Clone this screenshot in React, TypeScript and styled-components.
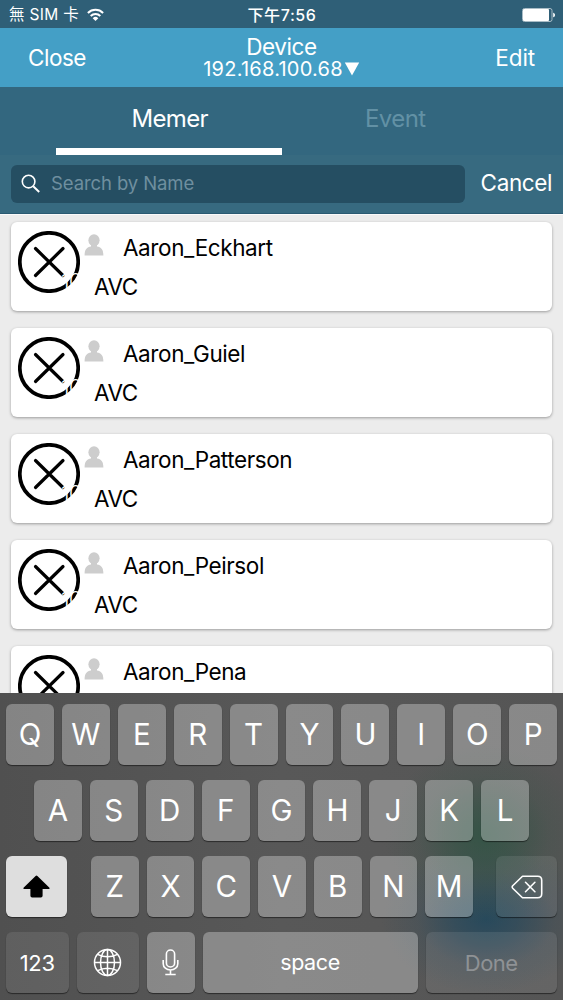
import React from 'react';
import styled, { createGlobalStyle } from 'styled-components';

const Global = createGlobalStyle`
  * { box-sizing: border-box; }
  html, body { margin: 0; padding: 0; overflow: hidden; }
  body { font-family: Inter, "Noto Sans CJK TC", sans-serif; background: #ededed; }
`;

const Screen = styled.div`
  width: 563px;
  height: 1000px;
  display: flex;
  flex-direction: column;
  overflow: hidden;
  background: #ececec;
`;

const Txt = styled.span<{ $size: number; $ls?: number; $color?: string; $weight?: number }>`
  font-size: ${p => p.$size}px;
  letter-spacing: ${p => p.$ls ?? 0}px;
  color: ${p => p.$color ?? '#fff'};
  font-weight: ${p => p.$weight ?? 400};
  line-height: 1;
  white-space: nowrap;
`;

const StatusBar = styled.header`
  height: 28px;
  flex: none;
  display: grid;
  grid-template-columns: 1fr auto 1fr;
  align-items: center;
  padding: 1px 8px 0 9px;
  background: #2f5f77;
`;

const Carrier = styled.div`
  display: flex;
  align-items: center;
  gap: 8px;
`;

const BatterySlot = styled.div`
  display: flex;
  justify-content: flex-end;
`;

const NavBar = styled.nav`
  height: 59px;
  flex: none;
  display: grid;
  grid-template-columns: 1fr auto 1fr;
  align-items: center;
  padding: 0 28px;
  background: #449fc6;
`;

const NavTitle = styled.div`
  display: flex;
  flex-direction: column;
  align-items: center;
`;

const Address = styled.div`
  display: flex;
  align-items: center;
  gap: 1px;
`;

const NavAction = styled.div<{ $end?: boolean }>`
  display: flex;
  justify-content: ${p => (p.$end ? 'flex-end' : 'flex-start')};
  padding-top: 1px;
`;

const Tabs = styled.div`
  height: 68px;
  flex: none;
  display: flex;
  padding: 0 56px;
  background: #33677f;
`;

const Tab = styled.div<{ $active?: boolean }>`
  flex: 1;
  display: flex;
  align-items: center;
  justify-content: center;
  padding: 3px 0 0 2px;
  border-bottom: 7px solid ${p => (p.$active ? '#fff' : 'transparent')};
`;

const SearchBar = styled.div`
  height: 59px;
  flex: none;
  display: flex;
  align-items: center;
  justify-content: space-between;
  padding: 0 11px 1px 11px;
  background: #376a80;
  border-bottom: 1px solid #2a5a72;
`;

const SearchField = styled.div`
  width: 454px;
  height: 38px;
  display: flex;
  align-items: center;
  gap: 11px;
  padding-left: 10px;
  border-radius: 6px;
  background: #254e62;
`;

const List = styled.main`
  height: 479px;
  flex: none;
  display: flex;
  flex-direction: column;
  gap: 17px;
  padding: 7px 11px 0;
  overflow: hidden;
  border-top: 1px solid #fafafa;
`;

const Card = styled.article`
  height: 89px;
  flex: none;
  display: flex;
  border-radius: 6px;
  background: #fff;
  box-shadow: 0 1px 3px rgba(0, 0, 0, 0.35);
`;

const Badge = styled.div`
  position: relative;
  width: 62px;
  height: 62px;
  margin: 9px 0 0 7px;
`;

const Count = styled.span`
  position: absolute;
  left: 43px;
  top: 39px;
  color: #fff;
  font-size: 22px;
  font-weight: 300;
  line-height: 1;
  letter-spacing: -1px;
  opacity: 0.99;
`;

const Details = styled.div`
  display: flex;
  flex-direction: column;
  padding: 12px 0 0 4px;
`;

const NameRow = styled.div`
  height: 28px;
  display: flex;
  align-items: flex-start;
  gap: 19px;
`;

const NameText = styled.div`
  padding-top: 3px;
`;

const Group = styled.div`
  padding: 14px 0 0 10px;
  line-height: 1;
`;

const Keyboard = styled.section`
  height: 307px;
  flex: none;
  display: flex;
  flex-direction: column;
  gap: 15px;
  padding: 11px 6px 0;
  background:
    radial-gradient(ellipse 100px 90px at 484px 142px, rgba(42, 83, 65, 0.75), rgba(42, 83, 65, 0.52) 30%, rgba(42, 83, 65, 0.16) 65%, transparent),
    radial-gradient(ellipse 105px 75px at 486px 226px, rgba(32, 71, 93, 0.85), rgba(32, 71, 93, 0.6) 30%, rgba(32, 71, 93, 0.18) 65%, transparent),
    linear-gradient(90deg, #505050, #585858 50%, #555);
`;

const KeyRow = styled.div<{ $inset?: number }>`
  height: 61px;
  display: flex;
  gap: 8px;
  padding: 0 ${p => p.$inset ?? 0}px;
`;

const Key = styled.div<{ $width?: number; $tone?: 'dark' | 'light'; $before?: number }>`
  flex: ${p => (p.$width ? `0 0 ${p.$width}px` : '1 1 0')};
  min-width: 0;
  height: 61px;
  margin-left: ${p => p.$before ?? 0}px;
  display: flex;
  align-items: center;
  justify-content: center;
  border-radius: 6px;
  background: ${p =>
    p.$tone === 'light' ? '#dedede' : p.$tone === 'dark' ? 'rgba(255,255,255,0.09)' : 'rgba(255,255,255,0.3)'};
  box-shadow: 0 1px 1px rgba(0, 0, 0, 0.5);
`;

const Wifi = () => (
  <svg width="17" height="13" viewBox="0 0 17 13" fill="none" stroke="#fff" strokeWidth="2">
    <path d="M.9 5a10.8 10.8 0 0 1 15.2 0" />
    <path d="M3.7 8a6.8 6.8 0 0 1 9.6 0" />
    <path d="M8.5 13 5.7 10.2a4 4 0 0 1 5.6 0z" fill="#fff" stroke="none" />
  </svg>
);

const Battery = () => (
  <svg width="33" height="14" viewBox="0 0 33 14">
    <rect x=".5" y=".5" width="29.5" height="13" rx="2" fill="none" stroke="#a9bcc6" />
    <rect x="1" y="1" width="26" height="12" rx="1" fill="#fff" />
    <path d="M31.2 4.7c2.4.6 2.4 4 0 4.6z" fill="#fff" />
  </svg>
);

const Magnifier = () => (
  <svg width="19" height="19" viewBox="0 0 19 19" fill="none" stroke="#fff" strokeWidth="1.6">
    <circle cx="7.6" cy="7.6" r="6.3" />
    <path d="m12.2 12.2 6 5.8" strokeWidth="2" />
  </svg>
);

const CrossCircle = () => (
  <svg width="62" height="62" viewBox="0 0 62 62" fill="none" stroke="#000" strokeLinecap="round">
    <circle cx="31" cy="31" r="29.2" strokeWidth="3.7" />
    <path d="m17.5 17.5 27.5 27M45 17.5l-27.5 27" strokeWidth="3.2" />
  </svg>
);

const Person = () => (
  <svg width="20" height="22" viewBox="0 0 20 22" fill="#cdcdcd">
    <ellipse cx="10" cy="6.3" rx="5.6" ry="6" />
    <path d="M7 11h6v1.4c4 .7 6.4 2.6 6.4 9.2H.6c0-6.6 2.4-8.5 6.4-9.2z" />
  </svg>
);

const Shift = () => (
  <svg width="27" height="23" viewBox="0 0 27 23">
    <path d="M12.6.9q.9-.8 1.8 0l11.8 11.6c.8.8.4 1.5-.6 1.5h-6v6.8q0 1.7-1.7 1.7H9.1q-1.7 0-1.7-1.7V14h-6c-1 0-1.4-.7-.6-1.5z" />
  </svg>
);

const Globe = () => (
  <svg width="29" height="29" viewBox="0 0 29 29" fill="none" stroke="#fff" strokeWidth="1.5">
    <circle cx="14.5" cy="14.5" r="13" />
    <ellipse cx="14.5" cy="14.5" rx="7" ry="13" />
    <path d="M14.5 1.5v26M1.5 14.5h26M4.5 6.3q10 5 20 0M4.5 22.7q10-5 20 0" />
  </svg>
);

const Mic = () => (
  <svg width="17" height="27" viewBox="0 0 17 27" fill="none" stroke="#fff" strokeWidth="1.6">
    <rect x="4.4" y="1" width="8.2" height="17" rx="4.1" />
    <path d="M1.2 11v3.7a7.3 6.3 0 0 0 14.6 0V11M8.5 21v4.500M3.3 25.500h10.400" />
  </svg>
);

const Backspace = () => (
  <svg width="32" height="24" viewBox="0 0 32 24" fill="none" stroke="#fff" strokeWidth="1.6" strokeLinejoin="round" strokeLinecap="round">
    <path d="M11.5 1.3h15.200q4 0 4 4v13.400q0 4-4 4H11.500L1.700 13.200q-1-1.200 0-2.400z" />
    <path d="m14.5 7.3 9.4 9.4m0-9.400-9.400 9.400" />
  </svg>
);

const Down = () => (
  <svg width="16" height="14" viewBox="0 0 16 14" fill="#fff">
    <path d="M.8.5h14.4L8 13.5z" />
  </svg>
);

type Member = { name: string; group?: string; count?: number };

const members: Member[] = [
  { name: 'Aaron_Eckhart', group: 'AVC', count: 10 },
  { name: 'Aaron_Guiel', group: 'AVC', count: 10 },
  { name: 'Aaron_Patterson', group: 'AVC', count: 10 },
  { name: 'Aaron_Peirsol', group: 'AVC', count: 10 },
  { name: 'Aaron_Pena' },
];

const Letter = ({ children, before }: { children: string; before?: number }) => (
  <Key $before={before}>
    <Txt $size={29.5} $weight={400}>{children}</Txt>
  </Key>
);

export default function App() {
  return (
    <Screen>
      <Global />
      <StatusBar>
        <Carrier>
          <Txt $size={15.5} $ls={0.3}>無 SIM 卡</Txt>
          <Wifi />
        </Carrier>
        <Txt $size={16} $ls={0.6} $weight={500}>下午7:56</Txt>
        <BatterySlot>
          <Battery />
        </BatterySlot>
      </StatusBar>
      <NavBar>
        <NavAction>
          <Txt $size={22.5} $ls={-0.5}>Close</Txt>
        </NavAction>
        <NavTitle>
          <Txt $size={22.5} $ls={-0.4}>Device</Txt>
          <Address>
            <Txt $size={20} $ls={0.25}>192.168.100.68</Txt>
            <Down />
          </Address>
        </NavTitle>
        <NavAction $end>
          <Txt $size={22.5} $ls={-0.1}>Edit</Txt>
        </NavAction>
      </NavBar>
      <Tabs>
        <Tab $active>
          <Txt $size={24} $ls={-0.65}>Memer</Txt>
        </Tab>
        <Tab>
          <Txt $size={24} $ls={-0.6} $color="#6291a5">Event</Txt>
        </Tab>
      </Tabs>
      <SearchBar>
        <SearchField>
          <Magnifier />
          <Txt $size={18.5} $ls={-0.1} $color="#6f8f9f">Search by Name</Txt>
        </SearchField>
        <Txt $size={22.5} $ls={-0.4}>Cancel</Txt>
      </SearchBar>
      <List>
        {members.map(({ name, group, count }) => (
          <Card key={name}>
            <Badge>
              <CrossCircle />
              {count !== undefined && <Count>{count}</Count>}
            </Badge>
            <Details>
              <NameRow>
                <Person />
                <NameText>
                  <Txt $size={22.5} $ls={-0.4} $color="#000">{name}</Txt>
                </NameText>
              </NameRow>
              {group && (
                <Group>
                  <Txt $size={22.5} $ls={-0.5} $color="#000">{group}</Txt>
                </Group>
              )}
            </Details>
          </Card>
        ))}
      </List>
      <Keyboard>
        <KeyRow>
          {'QWERTYUIOP'.split('').map(c => <Letter key={c}>{c}</Letter>)}
        </KeyRow>
        <KeyRow $inset={28}>
          {'ASDFGHJKL'.split('').map(c => <Letter key={c}>{c}</Letter>)}
        </KeyRow>
        <KeyRow>
          <Key $width={61} $tone="light">
            <Shift />
          </Key>
          {'ZXCVBNM'.split('').map((c, i) => <Letter key={c} before={i === 0 ? 16 : 0}>{c}</Letter>)}
          <Key $width={61} $tone="dark" $before={15}>
            <Backspace />
          </Key>
        </KeyRow>
        <KeyRow>
          <Key $width={62.5} $tone="dark">
            <Txt $size={22} $ls={-0.3}>123</Txt>
          </Key>
          <Key $width={62.5} $tone="dark">
            <Globe />
          </Key>
          <Key $width={47.5}>
            <Mic />
          </Key>
          <Key>
            <Txt $size={21.5} $ls={-0.4}>space</Txt>
          </Key>
          <Key $width={131.5} $tone="dark">
            <Txt $size={22} $ls={-0.5} $color="#8f9295">Done</Txt>
          </Key>
        </KeyRow>
      </Keyboard>
    </Screen>
  );
}
